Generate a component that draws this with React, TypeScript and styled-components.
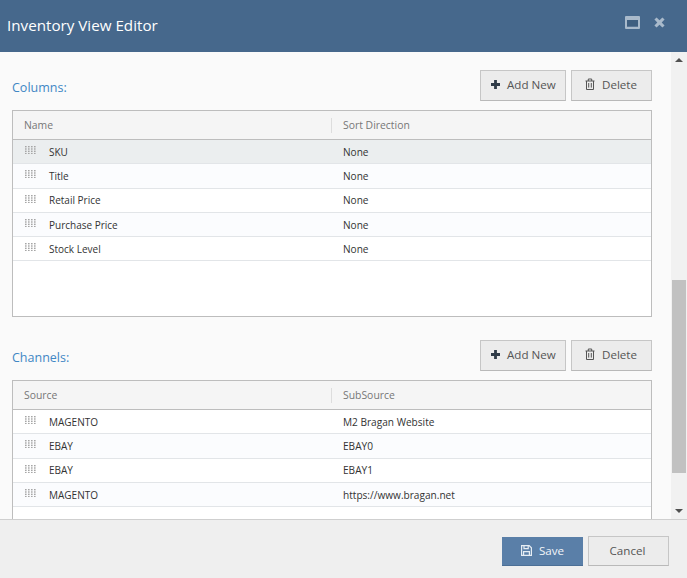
import { createGlobalStyle } from "styled-components";
import styled from "styled-components";

const GlobalStyle = createGlobalStyle`
  html, body {
    margin: 0;
    padding: 0;
    height: 100%;
    overflow: hidden;
  }
  * {
    box-sizing: border-box;
  }
  body {
    font-family: "Open Sans", "Liberation Sans", sans-serif;
  }
`;

const columnRows = [
  ["SKU", "None"],
  ["Title", "None"],
  ["Retail Price", "None"],
  ["Purchase Price", "None"],
  ["Stock Level", "None"],
];

const channelRows = [
  ["MAGENTO", "M2 Bragan Website"],
  ["EBAY", "EBAY0"],
  ["EBAY", "EBAY1"],
  ["MAGENTO", "https://www.bragan.net"],
];

const DragHandle = () => (
  <HandleSvg width="11" height="8" viewBox="0 0 11 8">
    {[0, 1, 2, 3].map((x) =>
      [0, 1, 2, 3].map((y) => (
        <rect key={`${x}-${y}`} x={x * 3} y={y * 2.3} width="1.6" height="1.4" fill="#a6a6a6" />
      ))
    )}
  </HandleSvg>
);

const PlusIcon = () => (
  <svg width="11" height="11" viewBox="0 0 11 11">
    <path d="M4.1 1h2.8v3.1H10v2.8H6.9V10H4.1V6.9H1V4.1h3.1z" fill="#2f3b48" />
  </svg>
);

const TrashIcon = () => (
  <svg width="10" height="12" viewBox="0 0 10 12" fill="none" stroke="#555" strokeWidth="1">
    <path d="M.5 3h9M3.3 3V1h3.4v2M1.5 3v8.5h7V3M3.7 5v4.6M6.3 5v4.6" />
  </svg>
);

const SaveIcon = () => (
  <svg width="11" height="11" viewBox="0 0 11 11" fill="none" stroke="#e6edf4" strokeWidth="1.2">
    <path d="M.6.6h7.6l2.2 2.2v7.6H.6zM3 .8v2.8h4.2V.8M2.6 10.3V6.6h5.8v3.7" />
  </svg>
);

const MaximizeIcon = () => (
  <svg width="15" height="13" viewBox="0 0 15 13">
    <path fillRule="evenodd" d="M0 1a1 1 0 0 1 1-1h13a1 1 0 0 1 1 1v11a1 1 0 0 1-1 1H1a1 1 0 0 1-1-1zM2 4v6.5h11V4z" fill="#a9bacb" />
    <rect x="2" y="4" width="11" height="6.5" fill="#3f5f80" />
  </svg>
);

const CloseIcon = () => (
  <svg width="11" height="11" viewBox="0 0 11 11">
    <path d="M2.6.4 5.5 3.3 8.4.4l2.2 2.2-2.9 2.9 2.9 2.9-2.2 2.2-2.9-2.9-2.9 2.9L.4 8.4l2.9-2.9L.4 2.6z" fill="#a9bacb" />
  </svg>
);

type GridProps = {
  first: string;
  second: string;
  rows: string[][];
  highlight?: boolean;
  clipped?: boolean;
};

const DataGrid = ({ first, second, rows, highlight, clipped }: GridProps) => (
  <Grid $clipped={clipped}>
    <GridHead>
      <HeadCell>{first}</HeadCell>
      <HeadCell $divider>{second}</HeadCell>
    </GridHead>
    {rows.map((row, i) => (
      <Row key={i} $selected={highlight && i === 0} $odd={i % 2 === 1}>
        <NameCell>
          <DragHandle />
          {row[0]}
        </NameCell>
        <ValueCell>{row[1]}</ValueCell>
      </Row>
    ))}
  </Grid>
);

const SectionHead = ({ title }: { title: string }) => (
  <SectionBar>
    <SectionTitle>{title}</SectionTitle>
    <AddButton>
      <PlusIcon />
      Add New
    </AddButton>
    <DeleteButton>
      <TrashIcon />
      Delete
    </DeleteButton>
  </SectionBar>
);

export default function App() {
  return (
    <Dialog>
      <GlobalStyle />
      <Header>
        <Title>Inventory View Editor</Title>
        <HeaderIcons>
          <MaximizeIcon />
          <CloseIcon />
        </HeaderIcons>
      </Header>
      <Middle>
        <Content>
          <SectionHead title="Columns:" />
          <DataGrid first="Name" second="Sort Direction" rows={columnRows} highlight />
          <Spacer />
          <SectionHead title="Channels:" />
          <DataGrid first="Source" second="SubSource" rows={channelRows} clipped />
        </Content>
        <Scrollbar>
          <Arrow $up />
          <Track>
            <Thumb />
          </Track>
          <Arrow />
        </Scrollbar>
      </Middle>
      <Footer>
        <SaveButton>
          <SaveIcon />
          Save
        </SaveButton>
        <CancelButton>Cancel</CancelButton>
      </Footer>
    </Dialog>
  );
}

const Dialog = styled.div`
  width: 687px;
  height: 578px;
  display: flex;
  flex-direction: column;
  background: #fafafa;
  overflow: hidden;
`;

const Header = styled.div`
  height: 52px;
  flex: none;
  background: #46688c;
  display: flex;
  align-items: center;
  justify-content: space-between;
  padding: 0 22px 2px 7px;
`;

const Title = styled.div`
  color: #fff;
  font-size: 15.2px;
  line-height: 20px;
`;

const HeaderIcons = styled.div`
  display: flex;
  align-items: center;
  gap: 14px;
  padding-bottom: 5px;
`;

const Middle = styled.div`
  flex: 1;
  min-height: 0;
  display: flex;
`;

const Content = styled.div`
  flex: 1;
  min-width: 0;
  overflow: hidden;
  padding: 18px 19px 0 12px;
  background: #fafafa;
`;

const SectionBar = styled.div`
  display: flex;
  align-items: center;
  gap: 5px;
  height: 30px;
  margin-bottom: 10px;
`;

const SectionTitle = styled.div`
  flex: 1;
  color: #3f87c5;
  font-size: 12.5px;
  padding-top: 4px;
`;

const ToolButton = styled.button`
  height: 31px;
  display: flex;
  align-items: center;
  padding: 0 0 2px;
  background: #ececec;
  border: 1px solid #c6c6c6;
  border-bottom-color: #b9b9b9;
  color: #555;
  font-family: inherit;
  font-size: 11.6px;
  white-space: nowrap;
`;

const AddButton = styled(ToolButton)`
  width: 86px;
  gap: 6px;
  padding-left: 9px;
`;

const DeleteButton = styled(ToolButton)`
  width: 81px;
  gap: 7px;
  padding-left: 13px;
`;

const Grid = styled.div<{ $clipped?: boolean }>`
  height: ${(p) => (p.$clipped ? "170px" : "207px")};
  background: #fff;
  border: 1px solid #bdbdbd;
  border-bottom-width: ${(p) => (p.$clipped ? "0" : "1px")};
`;

const GridHead = styled.div`
  height: 29px;
  display: grid;
  grid-template-columns: 318px 1fr;
  align-items: center;
  background: #f5f5f5;
  border-bottom: 1px solid #bdbdbd;
`;

const HeadCell = styled.div<{ $divider?: boolean }>`
  height: 15px;
  line-height: 15px;
  font-size: 10.4px;
  color: #777;
  padding-left: 11px;
  border-left: ${(p) => (p.$divider ? "1px solid #ddd" : "none")};
`;

const Row = styled.div<{ $selected?: boolean; $odd?: boolean }>`
  height: 24.3px;
  display: grid;
  grid-template-columns: 318px 1fr;
  align-items: center;
  border-bottom: 1px solid #e2e5e8;
  background: ${(p) => (p.$selected ? "#ebeeef" : p.$odd ? "#fbfcfe" : "#fff")};
`;

const NameCell = styled.div`
  display: flex;
  align-items: center;
  font-size: 10px;
  color: #333;
  padding-left: 12px;
`;

const HandleSvg = styled.svg`
  margin-right: 13px;
  margin-top: -3px;
`;

const ValueCell = styled.div`
  font-size: 10.1px;
  color: #333;
  padding-left: 12px;
`;

const Spacer = styled.div`
  height: 23px;
`;

const Scrollbar = styled.div`
  width: 16px;
  flex: none;
  display: flex;
  flex-direction: column;
  background: #f1f1f1;
`;

const Track = styled.div`
  flex: 1;
  min-height: 0;
  padding: 212px 1px 0;
`;

const Thumb = styled.div`
  height: 193px;
  background: #c1c1c1;
`;

const Arrow = styled.div<{ $up?: boolean }>`
  height: 16px;
  flex: none;
  display: flex;
  align-items: center;
  justify-content: center;
  &::before {
    content: "";
    border-left: 4px solid transparent;
    border-right: 4px solid transparent;
    border-${(p) => (p.$up ? "bottom" : "top")}: 4px solid #505050;
  }
`;

const Footer = styled.div`
  height: 59px;
  flex: none;
  background: #efefef;
  border-top: 1px solid #cfcfcf;
  display: flex;
  align-items: center;
  justify-content: flex-end;
  gap: 5px;
  padding: 4px 18px 0 0;
`;

const SaveButton = styled.button`
  width: 81px;
  height: 29px;
  display: flex;
  align-items: center;
  justify-content: center;
  gap: 7px;
  padding-bottom: 2px;
  background: #5a7fa8;
  border: none;
  border-bottom: 1px solid #4c6f96;
  color: #f2f5f8;
  font-family: inherit;
  font-size: 11.6px;
`;

const CancelButton = styled.button`
  width: 81px;
  height: 30px;
  padding: 0 2px 2px 0;
  background: #ececec;
  border: 1px solid #c6c6c6;
  border-bottom-color: #b9b9b9;
  color: #555;
  font-family: inherit;
  font-size: 11.6px;
`;
